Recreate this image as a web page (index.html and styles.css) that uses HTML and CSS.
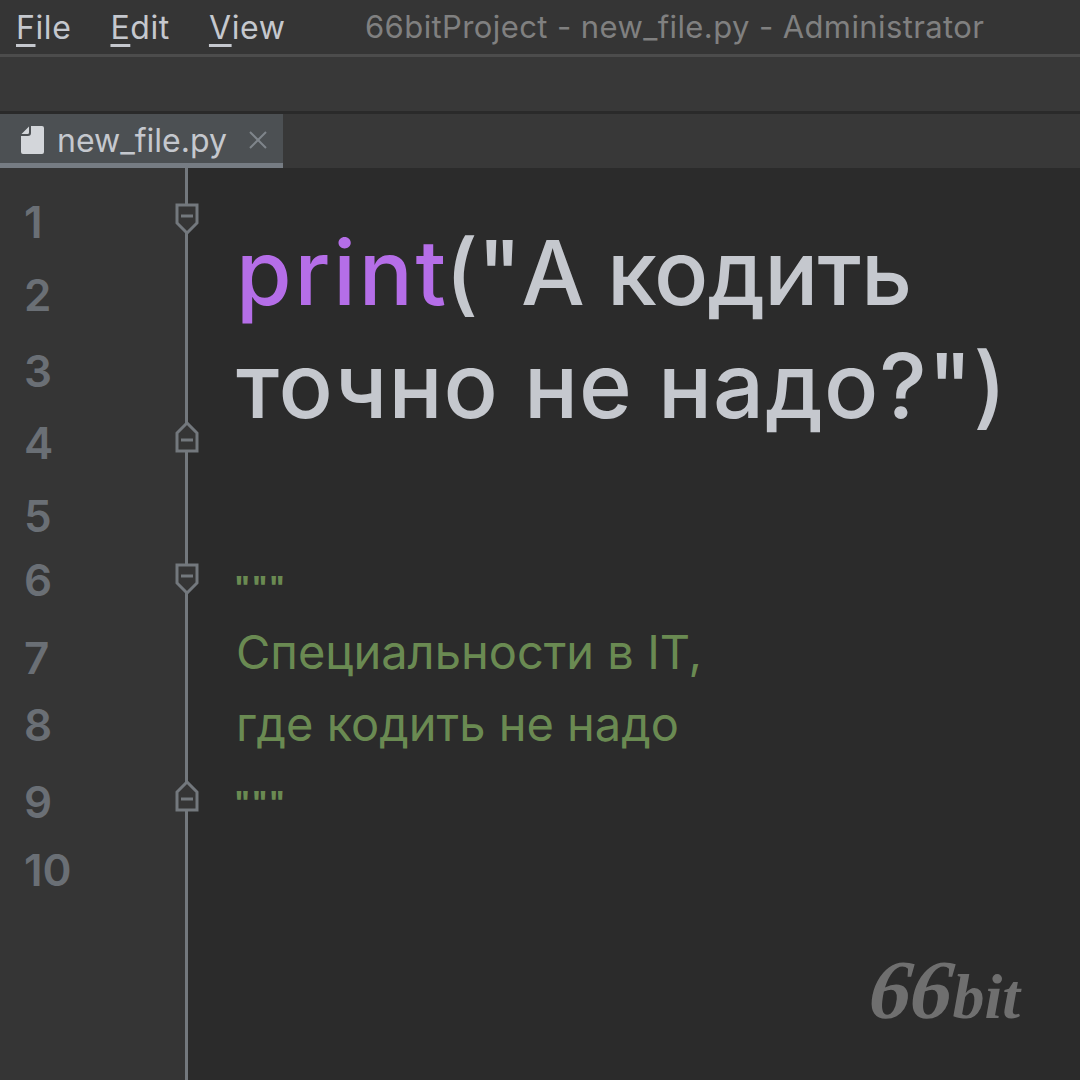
FILE: index.html
```html
<!DOCTYPE html>
<html lang="ru">
<head>
<meta charset="utf-8">
<title>66bitProject - new_file.py</title>
<link rel="stylesheet" href="styles.css">
</head>
<body>
<div class="window">
  <header class="menubar">
    <nav class="menu">
      <span class="menu-item"><u>F</u>ile</span>
      <span class="menu-item"><u>E</u>dit</span>
      <span class="menu-item"><u>V</u>iew</span>
    </nav>
    <div class="title">66bitProject - new_file.py - Administrator</div>
  </header>
  <div class="toolbar"></div>
  <div class="tabbar">
    <div class="tab">
      <svg class="file-icon" width="25" height="30" viewBox="0 0 25 30"><path d="M11 1H22a2 2 0 0 1 2 2V27a2 2 0 0 1-2 2H3a2 2 0 0 1-2-2V11H8a3 3 0 0 0 3-3Z M9 1.500V7.500a1.500 1.500 0 0 1-1.500 1.500H1.500Z" fill="#d3d6da"/></svg>
      <span class="tab-name">new_file.py</span>
      <svg class="tab-close" width="20" height="20" viewBox="0 0 20 20"><path d="M2 2L18 18M18 2L2 18" stroke="#7f858b" stroke-width="2" fill="none"/></svg>
    </div>
  </div>
  <main class="editor">
    <aside class="gutter">
      <div class="num n1">1</div>
      <div class="num n2">2</div>
      <div class="num n3">3</div>
      <div class="num n4">4</div>
      <div class="num n5">5</div>
      <div class="num n6">6</div>
      <div class="num n7">7</div>
      <div class="num n8">8</div>
      <div class="num n9">9</div>
      <div class="num n10">10</div>
      <svg class="fold f1" width="24" height="32" viewBox="0 0 24 32"><path d="M2 2H22V20L12 30L2 20Z" fill="#353535" stroke="#73787d" stroke-width="3"/><path d="M6 13H18" stroke="#73787d" stroke-width="3"/></svg>
      <svg class="fold f2" width="24" height="32" viewBox="0 0 24 32"><path d="M2 30H22V12L12 2L2 12Z" fill="#353535" stroke="#73787d" stroke-width="3"/><path d="M6 19H18" stroke="#73787d" stroke-width="3"/></svg>
      <svg class="fold f3" width="24" height="32" viewBox="0 0 24 32"><path d="M2 2H22V20L12 30L2 20Z" fill="#353535" stroke="#73787d" stroke-width="3"/><path d="M6 13H18" stroke="#73787d" stroke-width="3"/></svg>
      <svg class="fold f4" width="24" height="32" viewBox="0 0 24 32"><path d="M2 30H22V12L12 2L2 12Z" fill="#353535" stroke="#73787d" stroke-width="3"/><path d="M6 19H18" stroke="#73787d" stroke-width="3"/></svg>
    </aside>
    <section class="code">
      <div class="big first"><span class="kw">print</span>("А кодить</div>
      <div class="big wide">точно не надо?")</div>
      <div class="comment">
        <div class="quotes">"""</div>
        <div class="cline">Специальности в IT,</div>
        <div class="cline">где кодить не надо</div>
        <div class="quotes q2">"""</div>
      </div>
      <div class="logo"><span class="l66">66</span><span class="lbit">bit</span></div>
    </section>
  </main>
</div>
</body>
</html>
```
FILE: styles.css
```css
* { box-sizing: border-box; }
html, body { margin: 0; padding: 0; background: #2b2b2b; }
body { font-family: Inter, "Open Sans", sans-serif; }
.window { width: 1080px; height: 1080px; display: flex; flex-direction: column; overflow: hidden; background: #2b2b2b; }
.menubar { height: 57px; flex: none; background: #353535; border-bottom: 3px solid #4c4c4c; display: flex; align-items: center; padding-left: 16px; color: #c5c8ce; font-size: 32px; letter-spacing: 0.6px; }
.menu { display: flex; gap: 39px; width: 349px; flex: none; }
.menu-item { text-underline-offset: 5px; }
.menu-item u { text-decoration-thickness: 3px; }
.title { color: #808080; font-size: 31px; letter-spacing: 0.4px; white-space: nowrap; margin-top: -1px; }
.toolbar { height: 57px; flex: none; background: #383838; border-bottom: 3px solid #2a2a2a; }
.tabbar { height: 54px; flex: none; background: #383838; display: flex; }
.tab { width: 283px; background: #4c5053; border-bottom: 5px solid #767c83; display: flex; align-items: center; padding-left: 20px; }
.file-icon { flex: none; margin-right: 12px; margin-top: 2px; }
.tab-name { color: #c5c8ce; font-size: 32px; white-space: nowrap; margin-top: 4px; }
.tab-close { flex: none; margin-left: 21px; margin-top: 2px; }
.editor { flex: 1; display: flex; min-height: 0; }
.gutter { width: 188px; flex: none; background: #353535; border-right: 3px solid #73787d; position: relative; padding-left: 24px; }
.num { color: #6a6f75; font-weight: 600; font-size: 44px; line-height: 50px; height: 50px; }
.n1 { margin-top: 29px; }
.n2 { margin-top: 23px; }
.n3 { margin-top: 26px; }
.n4 { margin-top: 22px; }
.n5 { margin-top: 23px; }
.n6 { margin-top: 14px; }
.n7 { margin-top: 28px; }
.n8 { margin-top: 17px; }
.n9 { margin-top: 27px; }
.n10 { margin-top: 18px; }
.fold { position: absolute; left: 175px; }
.f1 { top: 35px; }
.f2 { top: 253px; }
.f3 { top: 395px; }
.f4 { top: 612px; }
.code { flex: 1; position: relative; padding-left: 48px; padding-top: 48px; min-width: 0; }
.big { font-size: 90px; line-height: 113px; color: #c5c8ce; white-space: nowrap; font-weight: 500; }
.first { letter-spacing: -0.9px; }
.wide { letter-spacing: 1px; }
.kw { color: #b56ee8; letter-spacing: 2.8px; margin-right: -4px; }
.comment { color: #6a8a52; font-size: 47px; margin-top: 113px; }
.quotes { height: 61px; line-height: 64px; font-size: 28px; letter-spacing: 1px; font-weight: 800; margin-left: -2px; }
.q2 { margin-top: 10px; }
.cline { height: 72px; line-height: 72px; white-space: nowrap; }
.logo { position: absolute; right: 60px; bottom: 48px; color: #6f6f6f; font-family: "Liberation Serif", serif; font-style: italic; line-height: 1; white-space: nowrap; }
.l66 { display: inline-block; font-size: 84px; font-weight: 700; letter-spacing: -1px; transform: skewX(-6deg); }
.lbit { font-size: 64px; font-weight: 700; }
```
